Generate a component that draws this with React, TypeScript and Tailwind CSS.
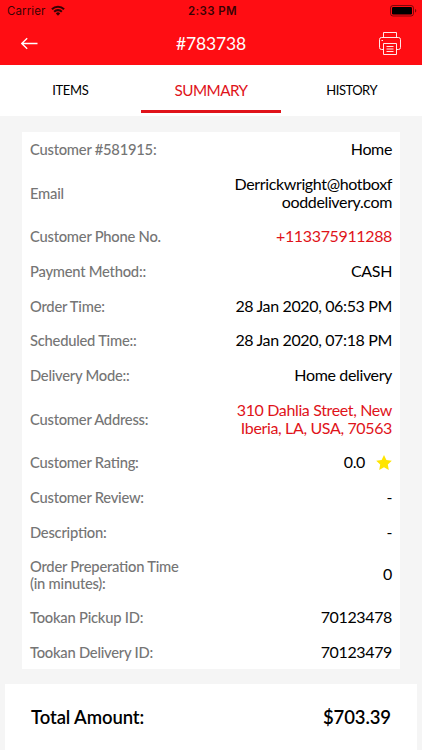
import React from 'react';

type Row = {
    label: string;
    value: string;
    red?: boolean;
    star?: boolean;
    height?: string;
};

const rows: Row[] = [
    { label: 'Customer #581915:', value: 'Home' },
    { label: 'Email', value: 'Derrickwright@hotboxfooddelivery.com', height: 'h-[53px]' },
    { label: 'Customer Phone No.', value: '+113375911288', red: true },
    { label: 'Payment Method::', value: 'CASH' },
    { label: 'Order Time:', value: '28 Jan 2020, 06:53 PM' },
    { label: 'Scheduled Time::', value: '28 Jan 2020, 07:18 PM' },
    { label: 'Delivery Mode::', value: 'Home delivery' },
    { label: 'Customer Address:', value: '310 Dahlia Street, New Iberia, LA, USA, 70563', red: true, height: 'h-[53px]' },
    { label: 'Customer Rating:', value: '0.0', star: true },
    { label: 'Customer Review:', value: '-' },
    { label: 'Description:', value: '-' },
    { label: 'Order Preperation Time (in minutes):', value: '0', height: 'h-[51px]' },
    { label: 'Tookan Pickup ID:', value: '70123478' },
    { label: 'Tookan Delivery ID:', value: '70123479' },
];

function StatusBar() {
    return (
        <div className="grid h-[22px] grid-cols-3 items-center pl-[7px] pr-[5px] font-['Inter',sans-serif] text-black/80">
            <div className="flex items-center gap-[6px]">
                <span className="pt-px text-[11.5px] tracking-[0.1px]">Carrier</span>
                <svg className="-mt-px" width="14" height="11" viewBox="0 0 15 11" fill="none" stroke="currentColor" strokeWidth="2.2">
                    <path d="M1 4.1a9.2 9.2 0 0 1 13 0" />
                    <path d="M3.4 6.8a5.8 5.8 0 0 1 8.2 0" />
                    <path d="M7.5 11 5.2 8.6a3.2 3.2 0 0 1 4.6 0Z" fill="currentColor" stroke="none" />
                </svg>
            </div>
            <span className="pl-px pt-px text-center text-[11.5px] font-semibold tracking-[0.4px]">2:33 PM</span>
            <svg className="justify-self-end" width="27" height="12" viewBox="0 0 27 12" fill="none">
                <rect x="0.5" y="0.5" width="23" height="10.5" rx="2.5" stroke="#000" strokeOpacity="0.5" />
                <rect x="2" y="2" width="20" height="7.5" rx="1.2" fill="#000" />
                <path d="M25 4v3.6c.8-.3 1.3-1 1.3-1.8S25.8 4.3 25 4Z" fill="#000" fillOpacity="0.5" />
            </svg>
        </div>
    );
}

function PrinterIcon() {
    return (
        <svg width="22" height="23" viewBox="0 0 22 23" fill="none" stroke="#fff" strokeOpacity="0.9" strokeWidth="1">
            <path d="M4.5 5.5v-5h13v5" />
            <path d="M4.5 17.5h-2a2 2 0 0 1-2-2v-8a2 2 0 0 1 2-2h17a2 2 0 0 1 2 2v8a2 2 0 0 1-2 2h-2" />
            <path d="M4.5 11.5h13v11h-13z" />
            <path d="M7.5 14.5h7M7.5 17h7M7.5 19.5h7M2.5 8.5h1.5" />
        </svg>
    );
}

function Header() {
    return (
        <header className="h-[65px] bg-[#ff0d13]">
            <StatusBar />
            <div className="flex h-[43px] items-center justify-between px-[21px] text-white">
                <svg width="22" height="13" viewBox="0 0 22 13" fill="none" stroke="currentColor" strokeWidth="1.3">
                    <path d="M16.5 6.5H.8M6.2 1.2.8 6.5l5.4 5.3" />
                </svg>
                <h1 className="text-[17.5px] leading-none tracking-[-0.15px]">#783738</h1>
                <PrinterIcon />
            </div>
        </header>
    );
}

function Tabs() {
    return (
        <nav className="grid h-[51px] grid-cols-3 bg-white text-center text-[13px] text-black">
            <button className="pt-[1px] tracking-[-0.35px]">ITEMS</button>
            <button className="mb-[3px] border-b-[3px] border-[#e0131a] pt-[5px] text-[15.25px] tracking-[-0.55px] text-[#e0131a]">SUMMARY</button>
            <button className="pt-[1px] tracking-[-0.5px]">HISTORY</button>
        </nav>
    );
}

function SummaryRow({ label, value, red, star, height }: Row) {
    return (
        <div className={`flex shrink-0 items-center justify-between ${height ?? 'h-[34.62px]'}`}>
            <span className="w-[160px] text-[14.75px] font-medium leading-[17px] tracking-[-0.24px] text-[#757575] [font-feature-settings:'liga'_1]">
                {label}
            </span>
            <span className={`flex w-[159px] items-center justify-end gap-[11px] pb-px text-right text-[16px] leading-[18px] tracking-[-0.36px] ${red ? 'text-[#e0131a]' : 'text-black'}`}>
                <span className="min-w-0 break-words">{value}</span>
                {star && (
                    <svg width="16" height="15" viewBox="0 0 16 15" fill="#ffe500">
                        <path d="m8 0 2.4 5 5.4.7-4 3.8 1 5.5L8 12.3 3.2 15l1-5.5-4-3.8L5.6 5Z" />
                    </svg>
                )}
            </span>
        </div>
    );
}

export default function App() {
    return (
        <main className="flex h-[750px] w-[422px] flex-col overflow-hidden bg-[#f5f5f5] font-['Lato',sans-serif]">
            <Header />
            <Tabs />
            <section className="mx-[22px] mt-[16px] flex h-[537px] shrink-0 flex-col bg-white px-2">
                {rows.map((row) => (
                    <SummaryRow key={row.label} {...row} />
                ))}
            </section>
            <section className="mx-[5px] mt-[15px] flex flex-1 items-center justify-between bg-white px-[26px] pt-[2px] text-[18.5px] font-semibold tracking-[-0.1px] text-black">
                <span>Total Amount:</span>
                <span>$703.39</span>
            </section>
        </main>
    );
}
